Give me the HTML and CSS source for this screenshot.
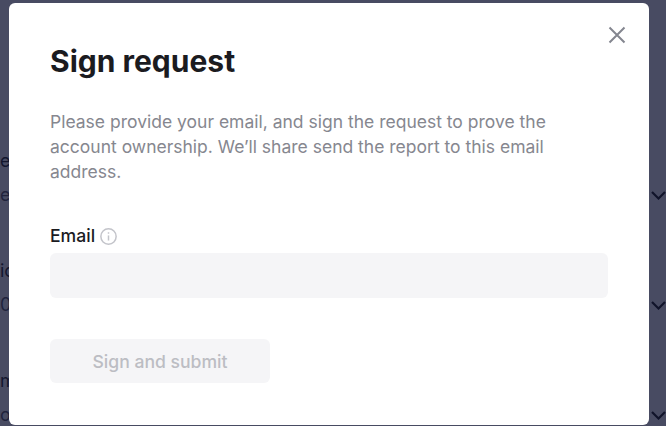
FILE: index.html
```html
<!DOCTYPE html>
<html lang="en">
<head>
<meta charset="utf-8">
<title>Sign request</title>
<link rel="stylesheet" href="styles.css">
</head>
<body>
<main class="page">
  <div class="field">
    <div class="field-label">e</div>
    <div class="field-value"><span>e</span>
      <svg class="chevron" viewBox="0 0 15 9"><path d="M1 1l6.5 6.5L14 1"/></svg>
    </div>
  </div>
  <div class="field">
    <div class="field-label">ic</div>
    <div class="field-value"><span>0</span>
      <svg class="chevron" viewBox="0 0 15 9"><path d="M1 1l6.5 6.5L14 1"/></svg>
    </div>
  </div>
  <div class="field">
    <div class="field-label">m</div>
    <div class="field-value"><span>o</span>
      <svg class="chevron" viewBox="0 0 15 9"><path d="M1 1l6.5 6.5L14 1"/></svg>
    </div>
  </div>
</main>
<div class="overlay"></div>
<section class="modal">
  <button class="close" aria-label="Close">
    <svg viewBox="0 0 18 18"><path d="M1.5 1.5l15 15M16.5 1.5l-15 15"/></svg>
  </button>
  <h1 class="title">Sign request</h1>
  <p class="intro">Please provide your email, and sign the request to prove the account ownership. We’ll share send the report to this email address.</p>
  <label class="label">Email
    <svg class="info" viewBox="0 0 16 16"><circle cx="8" cy="8" r="7.2"/><path d="M8 7v4.8"/><path d="M8 4v1.4"/></svg>
  </label>
  <input class="input" type="text">
  <button class="submit" disabled>Sign and submit</button>
</section>
</body>
</html>
```
FILE: styles.css
```css
* { box-sizing: border-box; }
html, body { margin: 0; height: 100%; overflow: hidden; }
body { font-family: Inter, "Liberation Sans", sans-serif; background: #fff; }

.page { padding-top: 150px; display: flex; flex-direction: column; gap: 58px; }
.field { display: flex; flex-direction: column; gap: 12px; height: 52px; }
.field-label { font-size: 18px; line-height: 22px; color: #111; }
.field-value { display: flex; justify-content: space-between; align-items: center; font-size: 18px; line-height: 22px; color: #4a4a55; }
.chevron { width: 15px; height: 9px; fill: none; stroke: #000; stroke-width: 2.2; }

.overlay { position: fixed; inset: 0; background: rgba(20, 24, 54, .78); }

.modal { position: fixed; left: 9px; top: 3px; width: 640px; height: 422px; background: #fff; border-radius: 6px; padding: 40px 41px; display: flex; flex-direction: column; align-items: flex-start; }
.close { position: absolute; top: 23px; right: 23px; width: 18px; height: 18px; padding: 0; border: 0; background: none; display: flex; }
.close svg { width: 18px; height: 18px; fill: none; stroke: #84868f; stroke-width: 2; }

.title { margin: 0; font-size: 30px; line-height: 36px; font-weight: 700; color: #1b1b1f; }
.intro { margin: 30px 0 0; width: 520px; font-size: 17.5px; line-height: 25px; color: #86878f; }
.label { margin-top: 40px; display: flex; align-items: center; gap: 5px; font-size: 17.6px; line-height: 24px; font-weight: 500; color: #1b1b1f; }
.info { width: 17px; height: 17px; fill: none; stroke: #c3c4ca; stroke-width: 1.4; }
.input { margin-top: 5px; width: 558px; height: 45px; border: 0; border-radius: 6px; background: #f5f5f7; }
.submit { margin-top: 41px; width: 220px; height: 44px; padding: 2px 0 0; border: 0; border-radius: 6px; background: #f5f5f7; color: #bcbdc3; font: 500 17.6px/24px Inter, "Liberation Sans", sans-serif; }
```
